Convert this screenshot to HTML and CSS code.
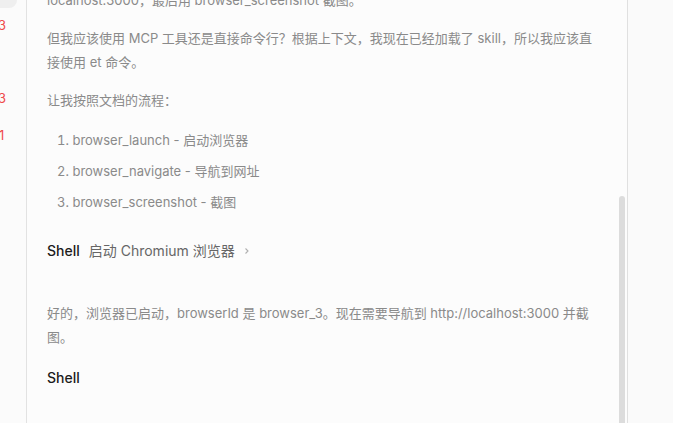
FILE: index.html
```html
<!DOCTYPE html>
<html lang="zh-CN">
<head>
  <meta charset="UTF-8">
  <meta name="viewport" content="width=device-width, initial-scale=1">
  <title>Chat</title>
  <link rel="stylesheet" href="styles.css">
</head>
<body>

  <aside class="rail">
    <div class="rail-active"></div>
    <span class="rail-num n1">3</span>
    <span class="rail-num n2">3</span>
    <span class="rail-num n3">1</span>
  </aside>

  <main class="thread">
    <div class="content">
      <p>localhost:3000，最后用 browser_screenshot 截图。</p>
      <p>但我应该使用 MCP 工具还是直接命令行？根据上下文，我现在已经加载了 skill，所以我应该直接使用 et 命令。</p>
      <p>让我按照文档的流程：</p>
      <ol class="steps">
        <li>browser_launch - 启动浏览器</li>
        <li>browser_navigate - 导航到网址</li>
        <li>browser_screenshot - 截图</li>
      </ol>

      <div class="tool">
        <span class="tool-name">Shell</span>
        <span class="tool-desc">启动 Chromium 浏览器</span>
        <svg class="chev" width="8" height="8" viewBox="0 0 8 8"><path d="M2.5 1.5 L5 4 L2.5 6.5" fill="none" stroke="#b0b0b0" stroke-width="1.1"/></svg>
      </div>

      <p class="after">好的，浏览器已启动，browserId 是 browser_3。现在需要导航到 http://localhost:3000 并截图。</p>

      <div class="tool tool-last">
        <span class="tool-name">Shell</span>
      </div>
    </div>
    <div class="scrollbar"></div>
  </main>

  <div class="side"></div>

</body>
</html>
```

FILE: styles.css
```css
* { margin: 0; padding: 0; box-sizing: border-box; }
html, body { height: 100%; }
body {
  display: flex;
  overflow: hidden;
  background: #fafafa;
  font-family: Inter, "Noto Sans CJK SC", sans-serif;
  font-size: 13px;
  line-height: 24px;
  color: #8a8a8a;
}

/* left rail */
.rail {
  width: 27px;
  flex-shrink: 0;
  border-right: 1px solid #e2e2e2;
  background: #fbfbfb;
  position: relative;
  overflow: hidden;
}
.rail-active {
  width: 19px; height: 8px;
  margin-left: -2px;
  background: #efefef;
  border-radius: 0 0 8px 0;
}
.rail-num {
  position: absolute;
  left: -2px;
  color: #ef4b4b;
  font-size: 13px;
  line-height: 16px;
}
.n1 { top: 17px; }
.n2 { top: 90px; }
.n3 { top: 127px; left: -1px; }

/* message thread */
.thread {
  width: 601px;
  flex-shrink: 0;
  border-right: 1px solid #e0e0e0;
  background: #fcfcfc;
  position: relative;
  overflow: hidden;
}
.content {
  padding: 0 28px 0 20px;
  margin-top: -12px;
}
.content p { margin-bottom: 14px; }
.steps {
  list-style: decimal inside;
  padding-left: 10px;
  margin-top: 16px;
}
.steps li { margin-bottom: 7px; }

.tool {
  display: flex;
  align-items: center;
  margin-top: 25px;
  height: 24px;
}
.tool-name {
  color: #1c1c1c;
  font-size: 14px;
  font-weight: 500;
}
.tool-desc {
  color: #666;
  font-size: 14px;
  margin-left: 9px;
}
.chev { margin-left: 8px; }

.after { margin-top: 38px; }
.content .after { margin-bottom: 0; }
.tool-last { margin-top: 17px; }

.scrollbar {
  position: absolute;
  right: 2px;
  top: 196px;
  bottom: 0;
  width: 6px;
  background: #dcdcdc;
  border-radius: 3px 3px 0 0;
}

.side { flex: 1; background: #fafafa; }
```
